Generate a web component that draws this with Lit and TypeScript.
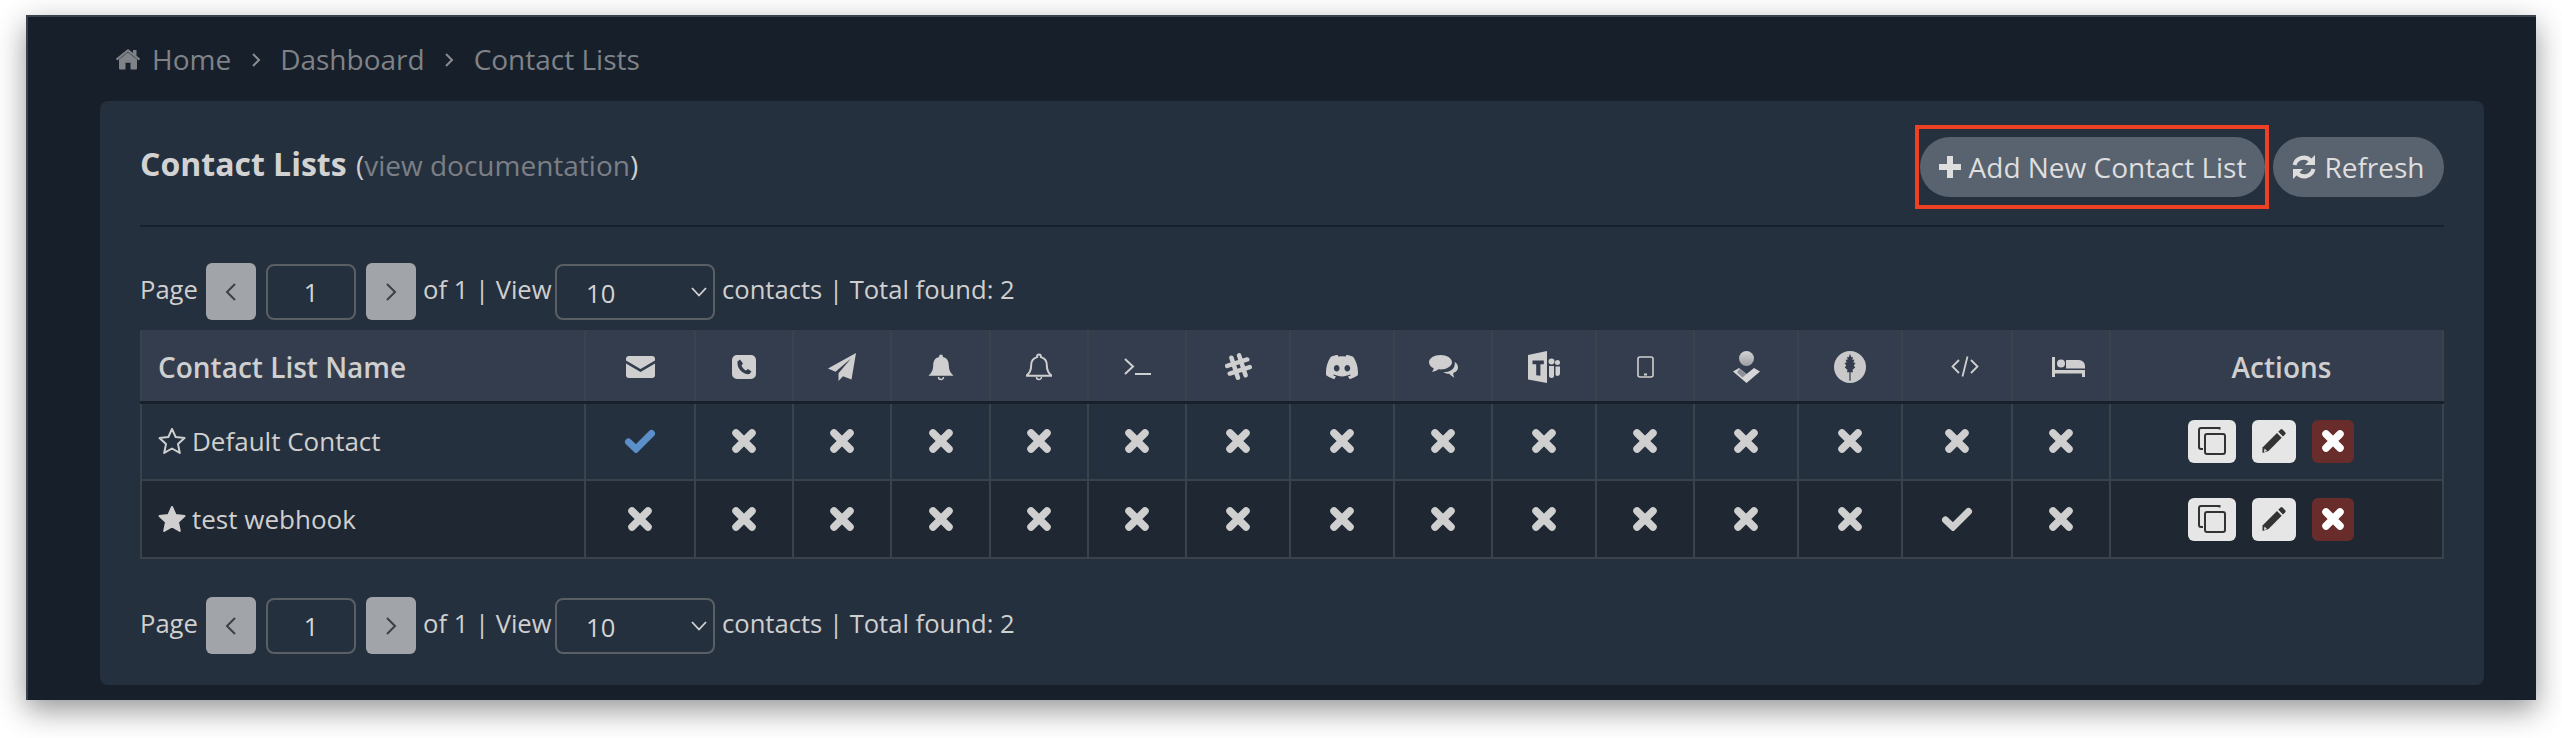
import { LitElement, css, html, svg } from 'lit'
import { customElement } from 'lit/decorators.js'

const icon = (w: number, h: number, body: unknown) => html`
  <svg class="ic" width=${w} height=${h} viewBox="0 0 ${w} ${h}" fill="currentColor">${body}</svg>
`

const bellPath =
  'M13 1.5c1.1 0 1.9.8 1.9 1.9v.7c3.9.9 5.9 3.9 5.9 8.2 0 4.8 1.5 7.8 4.7 10.4H.5C3.7 20.100 5.200 17.100 5.200 12.300c0-4.300 2-7.300 5.900-8.200v-.7c0-1.100.8-1.900 1.900-1.900z'

const check = (w = 32, h = 24) => icon(w, h, svg`
  <path d="M4.500 13 L12 20 L27.500 4.500" fill="none" stroke="currentColor" stroke-width="7" stroke-linejoin="miter" stroke-linecap="round" />
`)

const cross = (w = 24, h = 24) => icon(w, h, svg`
  <path d="M4 4 L${w - 4} ${h - 4} M${w - 4} 4 L4 ${h - 4}" fill="none" stroke="currentColor" stroke-width="7.500" stroke-linecap="round" />
`)

const star = (filled: boolean) => icon(28, 28, svg`
  <path d="M14 2 L17.700 10.100 L26.500 11.100 L20 17.100 L21.800 25.900 L14 21.500 L6.200 25.900 L8 17.100 L1.500 11.100 L10.300 10.100 Z"
    fill=${filled ? 'currentColor' : 'none'} stroke="currentColor" stroke-width="2" stroke-linejoin="round" />
`)

const chevron = (dir: 'left' | 'right', w = 12, h = 20) => icon(w, h, svg`
  <path d=${dir === 'left' ? `M${w - 2} 2 L2 ${h / 2} L${w - 2} ${h - 2}` : `M2 2 L${w - 2} ${h / 2} L2 ${h - 2}`}
    fill="none" stroke="currentColor" stroke-width="2" />
`)

const channels = [
  icon(29, 22, svg`<path d="M3 0h23a3 3 0 0 1 3 3v1.500L14.500 13 0 4.500V3a3 3 0 0 1 3-3z" /><path d="M0 7.500l14.500 8.500L29 7.500V19a3 3 0 0 1-3 3H3a3 3 0 0 1-3-3z" />`),
  icon(24, 24, svg`<path fill-rule="evenodd" d="M5 0h14a5 5 0 0 1 5 5v14a5 5 0 0 1-5 5H5a5 5 0 0 1-5-5V5a5 5 0 0 1 5-5zM8 4.500L5.500 6.500C5 10 6.500 13.500 9 16c2.500 2.500 5.500 3.500 8.500 3l2-2.500-3.500-2.500-2 1.500c-2-1-3.500-2.500-4.500-5L11 8.500z" />`),
  icon(28, 28, svg`<path d="M28 0 L0 15.500 L7.500 18.800 L23 5.500 L10.500 20.300 V28 L15 23.200 L23.500 26.500 Z" />`),
  icon(26, 28, svg`<path d=${bellPath} /><path d="M10.500 24a2.500 2.500 0 0 0 5 0" fill="none" stroke="currentColor" stroke-width="1.500" />`),
  icon(26, 28, svg`<path d=${bellPath} fill="none" stroke="currentColor" stroke-width="2" /><path d="M10.500 24a2.500 2.500 0 0 0 5 0" fill="none" stroke="currentColor" stroke-width="1.500" />`),
  icon(27, 17, svg`<path d="M1 1 L9 8.500 L1 16" fill="none" stroke="currentColor" stroke-width="2" /><path d="M11 16 H27" fill="none" stroke="currentColor" stroke-width="2" />`),
  icon(27, 27, svg`<g transform="rotate(-18 13.500 13.500)" fill="none" stroke="currentColor" stroke-width="4.500" stroke-linecap="round"><path d="M9.500 3 V24 M17.500 3 V24 M3 9.500 H24 M3 17.500 H24" /></g>`),
  html`<svg class="ic" width="32" height="24" viewBox="0 0 24 18" fill="currentColor"><path transform="translate(0 -3)" d="M20.317 4.370a19.791 19.791 0 0 0-4.885-1.515.074.074 0 0 0-.079.037c-.21.375-.444.864-.608 1.250a18.270 18.270 0 0 0-5.487 0 12.640 12.640 0 0 0-.617-1.250.077.077 0 0 0-.079-.037A19.736 19.736 0 0 0 3.677 4.370a.070.070 0 0 0-.032.027C.533 9.046-.32 13.580.099 18.057a.082.082 0 0 0 .031.057 19.900 19.900 0 0 0 5.993 3.030.078.078 0 0 0 .084-.028 14.090 14.090 0 0 0 1.226-1.994.076.076 0 0 0-.041-.106 13.107 13.107 0 0 1-1.872-.892.077.077 0 0 1-.008-.128 10.200 10.200 0 0 0 .372-.292.074.074 0 0 1 .077-.010c3.928 1.793 8.180 1.793 12.062 0a.074.074 0 0 1 .078.010c.12.098.246.198.373.292a.077.077 0 0 1-.006.127 12.299 12.299 0 0 1-1.873.892.077.077 0 0 0-.041.107c.36.698.772 1.362 1.225 1.993a.076.076 0 0 0 .084.028 19.839 19.839 0 0 0 6.002-3.030.077.077 0 0 0 .032-.054c.5-5.177-.838-9.674-3.549-13.660a.061.061 0 0 0-.031-.030zM8.020 15.330c-1.183 0-2.157-1.085-2.157-2.419 0-1.333.956-2.419 2.157-2.419 1.210 0 2.176 1.096 2.157 2.420 0 1.333-.956 2.418-2.157 2.418zm7.975 0c-1.183 0-2.157-1.085-2.157-2.419 0-1.333.955-2.419 2.157-2.419 1.210 0 2.176 1.096 2.157 2.420 0 1.333-.946 2.418-2.157 2.418z" /></svg>`,
  icon(29, 23, svg`<path d="M29 12.500c0-2.500-1.200-4.300-3.300-5.600.6 3.600-.8 6.600-4 8.500-2 1.200-4.400 1.700-7.300 1.600 1.500 1.200 3.500 1.900 5.800 1.800 1.300 1 2.800 3 5.300 4-.9-1.300-1.300-2.900-1.300-4.700C27.500 17 29 15 29 12.500z" /><path d="M11.500 0C5.200 0 0 3.200 0 7.200c0 2.600 1.900 4.700 4.700 6-.2 1.400-.9 2.700-2 3.800 2.700-.3 5-1.400 6.700-2.700.7.100 1.400.1 2.100.1 6.300 0 11.500-3.200 11.500-7.200S17.800 0 11.500 0z" />`),
  icon(32, 32, svg`<path fill-rule="evenodd" d="M19 0v32L0 28.500V4zM4.500 9.500v3.800h3.700v11l4.200.4V13.300h3.400V9.500z" /><circle cx="23.500" cy="10.500" r="3" /><circle cx="29.500" cy="11.500" r="2.500" /><path d="M21 15h5v9.500a2.500 2.500 0 0 1-5 0zM27.500 15.500H32v7a2.500 2.500 0 0 1-4.500 1.500z" />`),
  icon(17, 22, svg`<rect x="1" y="1" width="15" height="20" rx="2" fill="none" stroke="currentColor" stroke-width="1.600" /><rect x="7" y="17.500" width="3" height="2" />`),
  html`<svg class="ic" width="27" height="32" viewBox="0 0 27 32"><defs><linearGradient id="ops" x1="0" y1="0" x2="0" y2="1"><stop offset="0" stop-color="#d4d4d4" /><stop offset="1" stop-color="#9c9ea3" /></linearGradient></defs><circle cx="13.500" cy="7.500" r="7.500" fill="url(#ops)" /><path d="M0 20.500 L6 17 L13.500 23 L21 17 L27 20.500 L13.500 32 Z" fill="#d6d6d6" /><path d="M6.500 17.500 L13.500 23 L9.500 26.500 L4 21.500 Z" fill="#8e9198" /></svg>`,
  html`<svg class="ic" width="32" height="32" viewBox="0 0 32 32"><circle cx="16" cy="16" r="16" fill="#c9c9c9" /><path fill="#343d4e" transform="translate(16 0) scale(.62 .9) translate(-16 0)" d="M16 3 L18 7 L20.500 6.500 L20 10 L23 9.500 L21.500 13 L25 13 L22 16.500 L24.500 18 L20 21 L21 23.500 L17 23.500 L17 33 H15 V23.500 L11 23.500 L12 21 L7.500 18 L10 16.500 L7 13 L10.500 13 L9 9.500 L12 10 L11.500 6.500 L14 7 Z" /></svg>`,
  icon(28, 21, svg`<path d="M8 4 L1.500 10.500 L8 17 M20 4 L26.500 10.500 L20 17 M16.500 0.500 L11.500 20.500" fill="none" stroke="currentColor" stroke-width="1.800" />`),
  icon(33, 20, svg`<path d="M0 0h3v13h30v7h-3v-3.500H3V20H0z" /><circle cx="9" cy="6.500" r="4" /><path d="M14 3h13a6 6 0 0 1 6 6v2.500H14z" />`),
]

const refreshIcon = icon(24, 24, svg`
  <path d="M2.500 10 A9.500 9.500 0 0 1 18.500 5.500" fill="none" stroke="currentColor" stroke-width="4" />
  <path d="M23 0 V10 H13 Z" />
  <path d="M21.500 14 A9.500 9.500 0 0 1 5.500 18.500" fill="none" stroke="currentColor" stroke-width="4" />
  <path d="M1 24 V14 H11 Z" />
`)

const homeIcon = html`
  <svg class="ic" width="26" height="23" viewBox="0 0 26 24" preserveAspectRatio="none" fill="currentColor">
    <path d="M13 5.500 L22 13 V22.500 a1 1 0 0 1-1 1H15.500V16.500H10.500V23.500H5a1 1 0 0 1-1-1V13z" />
    <path d="M0.800 12.300 L13 2 L18 6.200 V3H21.500V9.200 L25.200 12.300 L23.800 14 L13 5 L2.200 14z" />
  </svg>
`

const copyIcon = icon(28, 28, svg`
  <path d="M21.500 2.500 V1 H3 a2 2 0 0 0-2 2 V20 a2 2 0 0 0 2 2 H5" fill="none" stroke="currentColor" stroke-width="2" />
  <rect x="7" y="7" width="20" height="20" rx="2" fill="none" stroke="currentColor" stroke-width="2" />
`)

const pencilIcon = icon(24, 24, svg`
  <path d="M18.500 0.500 a1.500 1.500 0 0 1 2 0 L23.200 3.200 a1.500 1.500 0 0 1 0 2 L21 7.500 L16.300 2.700 Z" />
  <path d="M15 4 L19.700 8.800 L6.500 22 L0.500 24 L0.500 18.500 Z" />
  <path d="M2.500 19.500 L5 22 L2 23 Z" fill="#e6e6e6" />
`)

const colWidths = [444, 110, 98, 98, 99, 98, 98, 104, 104, 98, 104, 98, 104, 104, 110, 98, 333]

const contactLists = [
  { name: 'Default Contact', starred: false, enabled: [0] },
  { name: 'test webhook', starred: true, enabled: [13] },
]

@customElement('app-root')
export class AppRoot extends LitElement {
  static styles = css`
    :host {
      display: block;
      height: 738px;
      box-sizing: border-box;
      padding: 15px 26px 38px;
      background: #fff;
      font-family: 'Open Sans', 'Liberation Sans', sans-serif;
      font-size: 26px;
      color: #cfcfcf;
      overflow: hidden;
    }

    .ic {
      display: block;
      flex: none;
    }

    .window {
      box-sizing: border-box;
      height: 685px;
      background: #171f2b;
      border-top: 2px solid #39424f;
      border-left: 2px solid #39424f;
      box-shadow: 0 10px 28px rgba(0, 0, 0, 0.42);
      padding: 0 52px 15px 72px;
      display: flex;
      flex-direction: column;
    }

    .crumbs {
      height: 84px;
      flex: none;
      display: flex;
      align-items: center;
      padding-left: 15px;
      box-sizing: border-box;
      color: #7f8388;
      font-size: 28px;
    }
    .crumbs .home { margin-right: 11px; margin-top: -2px; }
    .crumbs .sep { margin: 2px 19.5px 0; color: #8a8d92; }

    .panel {
      flex: 1;
      background: #25303e;
      border-radius: 8px;
      padding: 0 40px 30px;
    }

    .head {
      display: flex;
      justify-content: space-between;
      align-items: center;
      padding: 36px 0 28px;
      border-bottom: 2px solid #18202b;
    }
    .title { font-size: 28px; margin-top: -7px; color: #7b7f85; }
    .title b { font-size: 32px; font-weight: 700; color: #d2d2d2; }
    .title .paren { color: #cfcfcf; }
    .title .open { margin-left: 2px; }

    .btns { display: flex; gap: 8px; }
    .pill {
      height: 60px;
      box-sizing: border-box;
      border-radius: 30px;
      background: #596370;
      color: #dedede;
      font-size: 28px;
      display: flex;
      align-items: center;
      justify-content: center;
      gap: 8px;
    }
    .pill.add { width: 345px; }
    .pill.refresh { width: 171px; }
    .marked { position: relative; }
    .marked::after {
      content: '';
      position: absolute;
      inset: -12px -4px -12px -5px;
      border: 4px solid #ee4023;
      pointer-events: none;
    }

    .pager {
      height: 57px;
      display: flex;
      align-items: center;
      white-space: nowrap;
      font-size: 25.6px;
    }
    .pager.top { margin-top: 36px; margin-bottom: 10px; }
    .pager.bottom { margin-top: 38px; }
    .pager .lbl { margin-top: -4px; }
    .nav {
      width: 50px;
      height: 57px;
      background: #a1a5aa;
      color: #3b4046;
      border-radius: 6px;
      display: flex;
      align-items: center;
      justify-content: center;
    }
    .field {
      box-sizing: border-box;
      height: 56px;
      margin-top: 1px;
      border: 2px solid #5a5f65;
      border-radius: 8px;
      display: flex;
      align-items: center;
      color: #d4d4d4;
    }
    .num { width: 90px; justify-content: center; margin: 1px 10px 0; }
    .sel { width: 160px; justify-content: space-between; padding: 0 6px 0 29px; margin: 1px 7px 0 8px; }
    .sel span { margin-top: 3px; }
    .page-lbl { width: 66px; }
    .mid-lbl { width: 131px; padding-left: 7px; box-sizing: border-box; }

    table {
      width: 2303px;
      table-layout: fixed;
      border-collapse: collapse;
    }
    th, td {
      border: 2px solid #3a424c;
      padding: 0;
      text-align: center;
      vertical-align: middle;
    }
    thead tr { background: #343d4e; height: 72px; }
    thead th { border-top: none; border-bottom: 3px solid #18202b; font-weight: 600; font-size: 28px; padding-top: 3px; }
    thead th:nth-child(15), thead th:nth-child(16) { padding-left: 15px; }
    thead th:last-child { padding-left: 10px; }
    tbody tr { height: 78px; background: #25303e; }
    tbody tr.alt { background: #1f2733; }
    .cell { display: flex; align-items: center; justify-content: center; }
    th.name, td.name { text-align: left; padding-left: 16px; }
    .name .cell { justify-content: flex-start; gap: 6px; }
    .on { color: #5b8fc9; }

    .acts { gap: 16px; padding-right: 12px; }
    .act {
      height: 43px;
      border-radius: 6px;
      display: flex;
      align-items: center;
      justify-content: center;
      background: #e6e6e6;
      color: #333;
    }
    .act.copy { width: 48px; }
    .act.edit { width: 44px; }
    .act.del { width: 42px; background: #682d2b; color: #fff; }
  `

  private pager(pos: string) {
    return html`
      <div class="pager ${pos}">
        <span class="lbl page-lbl">Page</span>
        <div class="nav">${chevron('left')}</div>
        <div class="field num">1</div>
        <div class="nav">${chevron('right')}</div>
        <span class="lbl mid-lbl">of 1 | View</span>
        <div class="field sel">
          <span>10</span>
          ${icon(16, 10, svg`<path d="M1 1 L8 8.500 L15 1" fill="none" stroke="currentColor" stroke-width="1.800" />`)}
        </div>
        <span class="lbl">contacts | Total found: 2</span>
      </div>
    `
  }

  render() {
    return html`
      <div class="window">
        <div class="crumbs">
          <span class="home">${homeIcon}</span>
          Home
          <span class="sep">${chevron('right', 10, 16)}</span>
          Dashboard
          <span class="sep">${chevron('right', 10, 16)}</span>
          Contact Lists
        </div>
        <div class="panel">
          <div class="head">
            <div class="title">
              <b>Contact Lists</b> <span class="paren open">(</span>view documentation<span class="paren">)</span>
            </div>
            <div class="btns">
              <div class="pill add marked">
                ${icon(22, 22, svg`<path d="M8 0h6v8h8v6h-8v8H8v-8H0V8h8z" />`)}
                Add New Contact List
              </div>
              <div class="pill refresh">${refreshIcon} Refresh</div>
            </div>
          </div>

          ${this.pager('top')}

          <table>
            <colgroup>
              ${colWidths.map((w) => html`<col style="width:${w}px" />`)}
            </colgroup>
            <thead>
              <tr>
                <th class="name">Contact List Name</th>
                ${channels.map((c) => html`<th><div class="cell">${c}</div></th>`)}
                <th>Actions</th>
              </tr>
            </thead>
            <tbody>
              ${contactLists.map((row, i) => html`
                <tr class=${i % 2 ? 'alt' : ''}>
                  <td class="name"><div class="cell">${star(row.starred)} ${row.name}</div></td>
                  ${channels.map((_, c) => html`
                    <td>
                      <div class="cell ${row.enabled.includes(c) && c === 0 ? 'on' : ''}">
                        ${row.enabled.includes(c) ? check() : cross()}
                      </div>
                    </td>
                  `)}
                  <td>
                    <div class="cell acts">
                      <div class="act copy">${copyIcon}</div>
                      <div class="act edit">${pencilIcon}</div>
                      <div class="act del">${cross(22, 22)}</div>
                    </div>
                  </td>
                </tr>
              `)}
            </tbody>
          </table>

          ${this.pager('bottom')}
        </div>
      </div>
    `
  }
}
